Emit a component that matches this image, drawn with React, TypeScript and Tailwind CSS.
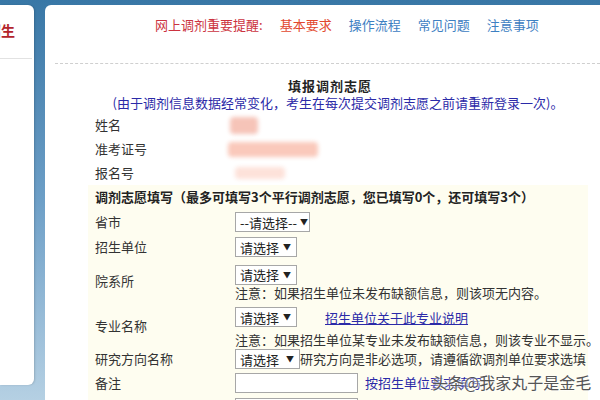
import React from 'react';

const font = { fontFamily: '"Noto Sans CJK SC", "Liberation Sans", sans-serif' };

const Select: React.FC<{ label: string; w: string }> = ({ label, w }) => (
  <div className={`${w} h-[20px] border border-[#a7a7a7] bg-white flex items-center justify-between pl-[4px] pr-[5px] text-[13px] leading-none text-[#222] shrink-0 whitespace-nowrap`}>
    <span>{label}</span>
    <span className="text-[8px] ml-[3px]">▼</span>
  </div>
);

const Row: React.FC<{ label: string; h: string; children?: React.ReactNode }> = ({ label, h, children }) => (
  <div className={`flex items-center ${h}`}>
    <div className="w-[147px] pl-[7px] text-[13px] text-[#333] shrink-0">{label}</div>
    <div className="flex-1">{children}</div>
  </div>
);

const App: React.FC = () => {
  return (
    <div style={font} className="w-[600px] h-[400px] overflow-hidden bg-gradient-to-b from-[#3877a6] via-[#6d9fc7] to-[#b5d0e3] flex pt-[5px]">
      {/* 左侧栏 */}
      <aside className="w-[34px] h-[380px] shrink-0 bg-white rounded-r-[6px] overflow-hidden shadow-[1px_0_2px_rgba(0,0,0,0.15)]">
        <div className="mt-[15px] -ml-[13px] text-[14px] font-bold text-[#b3242c] whitespace-nowrap leading-[20px]">招生</div>
        <div className="mt-[18px] h-px w-[32px] bg-[#e2e2e2]"></div>
      </aside>

      {/* 主体 */}
      <main className="ml-[11px] flex-1 bg-white rounded-tl-[6px] overflow-hidden">
        <nav className="flex items-center gap-[17px] pl-[110px] pt-[11px] h-[27px] text-[13px] leading-none whitespace-nowrap">
          <span className="text-[#cc3340]">网上调剂重要提醒:</span>
          <span className="text-[#e2482e]">基本要求</span>
          <span className="text-[#3d80c2]">操作流程</span>
          <span className="text-[#3d80c2]">常见问题</span>
          <span className="text-[#3d80c2]">注意事项</span>
        </nav>

        <div className="mt-[31px] ml-[10px] border-t border-dashed border-[#cfcfcf]"></div>

        <section className="ml-[43px] w-[500px]">
          <h2 className="mt-[14px] h-[16px] leading-[15px] text-center pr-[16px] text-[13px] font-bold tracking-[1px] text-[#222]">填报调剂志愿</h2>
          <p className="h-[16px] leading-[17px] text-center text-[13px] text-[#2b2aa8] whitespace-nowrap">(由于调剂信息数据经常变化，考生在每次提交调剂志愿之前请重新登录一次)。</p>

          <div className="mt-[3px]">
            <Row label="姓名" h="h-[24px]">
              <div className="ml-[-5px] w-[28px] h-[17px] rounded-[4px] bg-[#f6c4b8] blur-[2px]"></div>
            </Row>
            <Row label="准考证号" h="h-[24px]">
              <div className="ml-[-7px] w-[90px] h-[15px] rounded-[4px] bg-[#fac9bb] blur-[2px]"></div>
            </Row>
            <Row label="报名号" h="h-[24px]">
              <div className="w-[50px] h-[12px] rounded-[4px] bg-[#fde2da] blur-[2px]"></div>
            </Row>
          </div>

          <div className="bg-[#fefdf0] h-[220px]">
            <div className="h-[24px] flex items-center pl-[7px] text-[13px] font-bold text-[#222] whitespace-nowrap">
              调剂志愿填写（最多可填写3个平行调剂志愿，您已填写0个，还可填写3个）
            </div>
            <Row label="省市" h="h-[26px]">
              <Select label="--请选择--" w="w-[75px]" />
            </Row>
            <Row label="招生单位" h="h-[24px]">
              <Select label="请选择" w="w-[62px]" />
            </Row>
            <Row label="院系所" h="h-[44px]">
              <div className="pt-[3px]">
                <Select label="请选择" w="w-[62px]" />
                <div className="h-[16px] leading-[16px] text-[13px] text-[#333] whitespace-nowrap">注意：如果招生单位未发布缺额信息，则该项无内容。</div>
              </div>
            </Row>
            <Row label="专业名称" h="h-[45px]">
              <div className="pt-[4px]">
                <div className="flex items-center">
                  <Select label="请选择" w="w-[62px]" />
                  <a className="ml-[28px] text-[13px] leading-none text-[#2b2aa8] underline whitespace-nowrap">招生单位关于此专业说明</a>
                </div>
                <div className="mt-[5px] h-[16px] leading-[16px] text-[13px] text-[#333] whitespace-nowrap">注意：如果招生单位某专业未发布缺额信息，则该专业不显示。</div>
              </div>
            </Row>
            <Row label="研究方向名称" h="h-[22px]">
              <div className="flex items-center">
                <Select label="请选择" w="w-[65px]" />
                <span className="text-[13px] text-[#333] whitespace-nowrap">研究方向是非必选项，请遵循欲调剂单位要求选填</span>
              </div>
            </Row>
            <Row label="备注" h="h-[26px]">
              <div className="relative flex items-center">
                <div className="w-[123px] h-[20px] border border-[#a7a7a7] bg-white"></div>
                <a className="ml-[7px] text-[13px] text-[#2b2aa8] whitespace-nowrap">按招生单位要求填写</a>
                <span className="absolute left-[197px] top-[-3px] text-[16px] text-[#555] whitespace-nowrap [text-shadow:0_0_2px_#fff,0_0_2px_#fff]">头条@我家丸子是金毛</span>
              </div>
            </Row>
            <div className="flex">
              <div className="w-[147px]"></div>
              <div className="mt-[2px] w-[123px] h-[20px] border border-[#a7a7a7] bg-white"></div>
            </div>
          </div>
        </section>
      </main>
    </div>
  );
};

export default App;
